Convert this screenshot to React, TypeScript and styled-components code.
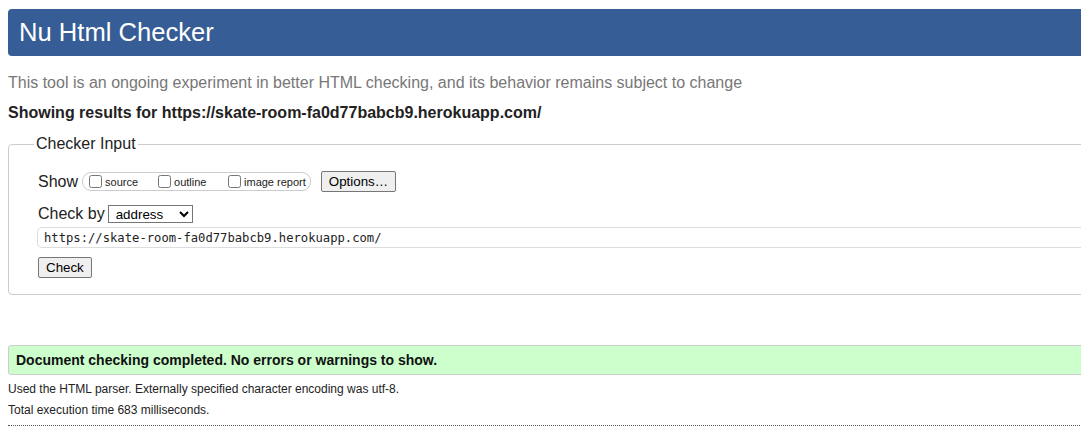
import React from "react";
import styled, { createGlobalStyle } from "styled-components";

const Global = createGlobalStyle`
  html, body { margin: 0; padding: 0; background: #fff; overflow: hidden; }
  body { font-family: "Liberation Sans", Arial, sans-serif; color: #222; }
`;

const Page = styled.div`
  width: 1110px;
  padding: 9px 0 0 8px;
  display: flex;
  flex-direction: column;
`;

const Header = styled.h1`
  margin: 0;
  background: #365d95;
  color: #fff;
  border-radius: 4px;
  height: 47px;
  display: flex;
  align-items: center;
  padding-left: 11px;
  font-weight: normal;
  font-size: 25.6px;
  line-height: 1;
`;

const Intro = styled.p`
  margin: 17px 0 0 0;
  font-size: 16px;
  line-height: 20px;
  color: #777;
`;

const Results = styled.p`
  margin: 10px 0 0 0;
  font-size: 16px;
  line-height: 20px;
  font-weight: bold;
  color: #222;
`;

const Form = styled.fieldset`
  margin: 12px 0 0 0;
  border: 1px solid #ccc;
  border-radius: 4px;
  padding: 18px 0 16px 0;
`;

const Legend = styled.legend`
  margin-left: 25px;
  padding: 0 2px;
  font-size: 16px;
  color: #222;
`;

const Inner = styled.div`
  padding-left: 29px;
  display: flex;
  flex-direction: column;
`;

const Row = styled.div<{ $top?: number }>`
  display: flex;
  align-items: center;
  font-size: 16px;
  color: #222;
  margin-top: ${(p) => p.$top ?? 0}px;
`;

const Group = styled.fieldset`
  margin: 0 0 0 4px;
  border: 1px solid #ccc;
  border-radius: 9px;
  padding: 0 4px 0 6px;
  height: 19px;
  box-sizing: border-box;
  display: flex;
  align-items: center;
`;

const Opt = styled.label<{ $w?: number }>`
  display: flex;
  align-items: center;
  font-size: 11px;
  color: #222;
  width: ${(p) => (p.$w ? `${p.$w}px` : "auto")};
  white-space: nowrap;
`;

const Box = styled.input`
  margin: 0 3px 0 0;
  width: 13px;
  height: 13px;
`;

const Button = styled.button<{ $ml?: number }>`
  font-family: "Liberation Sans", Arial, sans-serif;
  font-size: 13.33px;
  color: #000;
  background: #efefef;
  border: 1px solid #767676;
  border-radius: 2px;
  padding: 1px 7px;
  height: 21px;
  margin-left: ${(p) => p.$ml ?? 0}px;
`;

const Select = styled.select`
  margin-left: 3px;
  font-family: "Liberation Sans", Arial, sans-serif;
  font-size: 13.33px;
  height: 18px;
  width: 85px;
  color: #000;
  border: 1px solid #767676;
  border-radius: 0;
  padding: 0 0 0 3px;
  background: #fff;
`;

const Url = styled.input`
  margin: 4px 0 0 -1px;
  width: 1060px;
  height: 21px;
  box-sizing: border-box;
  border: 1px solid #ddd;
  border-radius: 5px;
  padding: 0 6px;
  font-family: "DejaVu Sans Mono", "Liberation Mono", monospace;
  font-size: 12.2px;
  color: #222;
`;

const Success = styled.div`
  margin-top: 50px;
  background: #ccffcc;
  border: 1px solid #ccc;
  border-radius: 3px;
  height: 30px;
  box-sizing: border-box;
  display: flex;
  align-items: center;
  padding-left: 7px;
  font-size: 14px;
  font-weight: bold;
  color: #111;
`;

const Note = styled.p<{ $top: number }>`
  margin: ${(p) => p.$top}px 0 0 0;
  font-size: 12px;
  line-height: 14px;
  color: #222;
`;

const Rule = styled.hr`
  margin: 8px 0 0 0;
  border: 0;
  border-top: 1px dotted #555;
`;

export default function App() {
  return (
    <>
      <Global />
      <Page>
        <Header>Nu Html Checker</Header>
        <Intro>
          This tool is an ongoing experiment in better HTML checking, and its behavior remains subject to change
        </Intro>
        <Results>Showing results for https://skate-room-fa0d77babcb9.herokuapp.com/</Results>
        <Form>
          <Legend>Checker Input</Legend>
          <Inner>
            <Row>
              Show
              <Group>
                <Opt $w={69}><Box type="checkbox" />source</Opt>
                <Opt $w={70}><Box type="checkbox" />outline</Opt>
                <Opt><Box type="checkbox" />image report</Opt>
              </Group>
              <Button $ml={10}>Options…</Button>
            </Row>
            <Row $top={13}>
              Check by
              <Select defaultValue="address">
                <option value="address">address</option>
              </Select>
            </Row>
            <Url defaultValue="https://skate-room-fa0d77babcb9.herokuapp.com/" />
            <Row $top={9}>
              <Button>Check</Button>
            </Row>
          </Inner>
        </Form>
        <Success>Document checking completed. No errors or warnings to show.</Success>
        <Note $top={7}>Used the HTML parser. Externally specified character encoding was utf-8.</Note>
        <Note $top={7}>Total execution time 683 milliseconds.</Note>
        <Rule />
      </Page>
    </>
  );
}
